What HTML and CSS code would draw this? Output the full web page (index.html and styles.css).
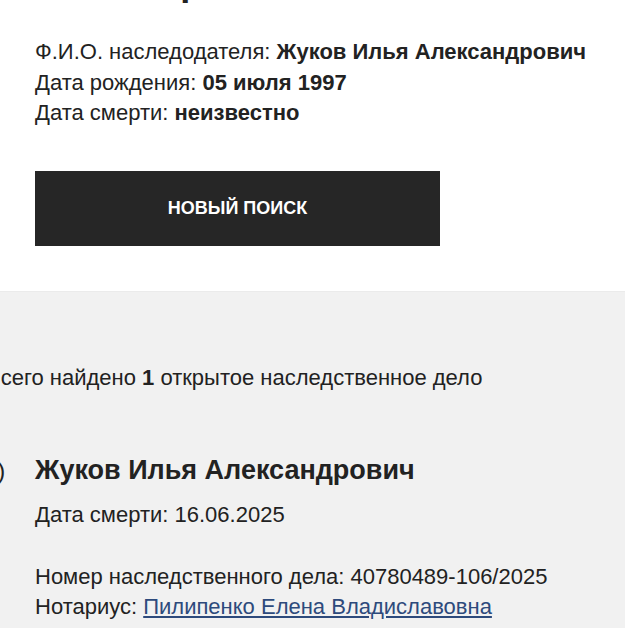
FILE: index.html
```html
<!DOCTYPE html>
<html lang="ru">
<head>
<meta charset="utf-8">
<title>Результат поиска</title>
<link rel="stylesheet" href="styles.css">
</head>
<body>
<section class="query">
  <h1 class="query-title">Ваш запрос</h1>
  <div class="query-info">
    <div>Ф.И.О. наследодателя: <b>Жуков Илья Александрович</b></div>
    <div>Дата рождения: <b>05 июля 1997</b></div>
    <div>Дата смерти: <b>неизвестно</b></div>
  </div>
  <a class="btn" href="#">НОВЫЙ ПОИСК</a>
</section>
<section class="results">
  <div class="results-inner">
    <p class="summary">Всего найдено <b>1</b> открытое наследственное дело</p>
    <div class="case">
      <div class="case-num">1)</div>
      <div class="case-body">
        <h2 class="case-name">Жуков Илья Александрович</h2>
        <div class="case-line">Дата смерти: 16.06.2025</div>
        <div class="case-details">
          <div>Номер наследственного дела: 40780489-106/2025</div>
          <div>Нотариус: <a class="link" href="#">Пилипенко Елена Владиславовна</a></div>
        </div>
      </div>
    </div>
  </div>
</section>
</body>
</html>
```

FILE: styles.css
```css
html, body {
  margin: 0;
  padding: 0;
  background: #ffffff;
  overflow: hidden;
}
body {
  font-family: "Liberation Sans", Arial, sans-serif;
  color: #222222;
  width: 625px;
}
.query {
  padding: 0 35px 45px;
  display: flex;
  flex-direction: column;
  align-items: flex-start;
}
.query-title {
  margin: -37px 0 0;
  font-size: 36px;
  line-height: 40px;
  font-weight: bold;
}
.query-info {
  margin-top: 34px;
  font-size: 22px;
  line-height: 30.5px;
}
.query-info b { font-weight: bold; }
.btn {
  margin-top: 42px;
  width: 405px;
  height: 75px;
  background: #262626;
  color: #ffffff;
  font-weight: bold;
  font-size: 18px;
  display: flex;
  align-items: center;
  justify-content: center;
  text-decoration: none;
}
.results {
  background: #f1f1f1;
  border-top: 1px solid #ebebeb;
  padding-top: 71px;
  min-height: 400px;
}
.results-inner {
  margin-left: -14px;
}
.summary {
  margin: 0;
  font-size: 22px;
  line-height: 30.5px;
}
.case {
  display: flex;
  margin-top: 62px;
  font-size: 22px;
  line-height: 30.5px;
}
.case-num {
  width: 49px;
  flex: none;
  line-height: 31px;
  font-size: 24px;
  margin-left: -2px;
  margin-right: 2px;
}
.case-name {
  margin: 0;
  font-size: 27px;
  line-height: 31px;
  font-weight: bold;
}
.case-line {
  margin-top: 14px;
}
.case-details {
  margin-top: 31px;
}
.link {
  color: #2d4a7c;
  text-decoration: underline;
}
```
